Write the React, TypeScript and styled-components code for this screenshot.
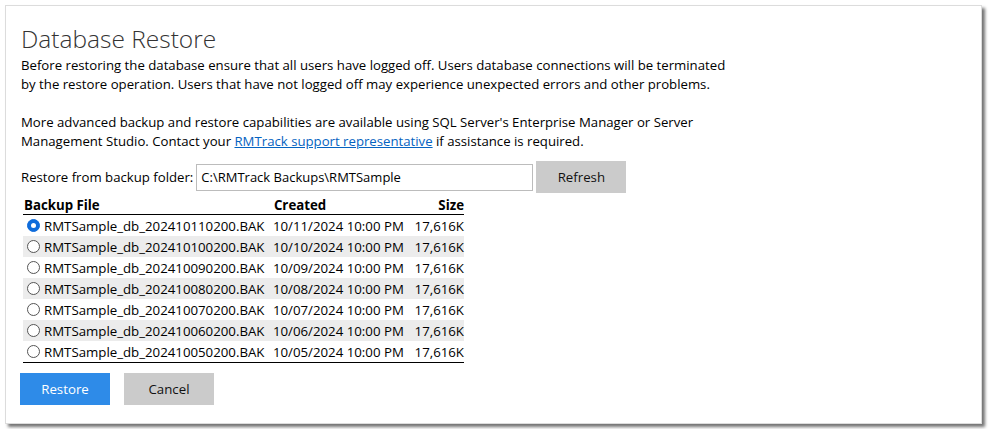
import React from "react";
import styled, { createGlobalStyle } from "styled-components";

const GlobalStyle = createGlobalStyle`
  body {
    margin: 0;
    background: #fff;
    font-family: "Open Sans", "Noto Sans", sans-serif;
    color: #000;
  }
`;

interface Backup {
  file: string;
  created: string;
  size: string;
}

const backups: Backup[] = [
  { file: "RMTSample_db_202410110200.BAK", created: "10/11/2024 10:00 PM", size: "17,616K" },
  { file: "RMTSample_db_202410100200.BAK", created: "10/10/2024 10:00 PM", size: "17,616K" },
  { file: "RMTSample_db_202410090200.BAK", created: "10/09/2024 10:00 PM", size: "17,616K" },
  { file: "RMTSample_db_202410080200.BAK", created: "10/08/2024 10:00 PM", size: "17,616K" },
  { file: "RMTSample_db_202410070200.BAK", created: "10/07/2024 10:00 PM", size: "17,616K" },
  { file: "RMTSample_db_202410060200.BAK", created: "10/06/2024 10:00 PM", size: "17,616K" },
  { file: "RMTSample_db_202410050200.BAK", created: "10/05/2024 10:00 PM", size: "17,616K" },
];

const Page = styled.div`
  padding: 5px;
`;

const Panel = styled.div`
  box-sizing: border-box;
  width: 977px;
  height: 419px;
  border: 1px solid #dcdcdc;
  box-shadow: 3px 3px 3px rgba(0, 0, 0, 0.55);
  background: #fff;
  padding: 16px 15px 0 15px;
`;

const Title = styled.h1`
  margin: 0;
  font-family: "Open Sans", sans-serif;
  font-weight: 300;
  font-size: 24.5px;
  line-height: 34px;
  color: #333;
`;

const Text = styled.p`
  margin: 0 0 19px 0;
  font-size: 13.2px;
  line-height: 19px;
  white-space: nowrap;
`;

const Link = styled.a`
  color: #0563c1;
  text-decoration: underline;
`;

const FolderRow = styled.div`
  display: flex;
  align-items: center;
  gap: 3px;
  margin-top: -9px;
  font-size: 13.2px;
`;

const FolderInput = styled.input`
  box-sizing: border-box;
  width: 337px;
  height: 27px;
  border: 1px solid #bcbcbc;
  padding: 0 4px;
  font-family: "Open Sans", sans-serif;
  font-size: 13px;
  color: #000;
  outline: none;
`;

const ActionButton = styled.button<{ primary?: boolean }>`
  box-sizing: border-box;
  width: 90px;
  height: 32px;
  border: none;
  background: ${({ primary }) => (primary ? "#2e8be8" : "#cbcbcb")};
  color: ${({ primary }) => (primary ? "#fff" : "#111")};
  font-family: "Open Sans", sans-serif;
  font-size: 13.25px;
  cursor: pointer;
`;

const Table = styled.table`
  margin-top: 2px;
  margin-left: 2px;
  width: 441px;
  border-collapse: collapse;
  font-size: 13.25px;
  border-bottom: 1px solid #000;
`;

const Th = styled.th<{ right?: boolean; w?: number }>`
  text-align: ${({ right }) => (right ? "right" : "left")};
  width: ${({ w }) => (w ? `${w}px` : "auto")};
  font-weight: 700;
  padding: 0 0 0 1px;
  height: 19px;
  border-bottom: 1px solid #000;
`;

const Tr = styled.tr<{ odd: boolean }>`
  background: ${({ odd }) => (odd ? "#ececec" : "transparent")};
`;

const Td = styled.td<{ right?: boolean }>`
  text-align: ${({ right }) => (right ? "right" : "left")};
  padding: 0;
  height: 21px;
  white-space: nowrap;
`;

const FileCell = styled.label`
  display: flex;
  align-items: center;
  gap: 4px;
`;

const Radio = styled.span<{ checked: boolean }>`
  box-sizing: border-box;
  width: 13px;
  height: 13px;
  margin-left: 4px;
  border-radius: 50%;
  border: 1px solid ${({ checked }) => (checked ? "#0f6cdb" : "#555")};
  background: ${({ checked }) => (checked ? "#0f6cdb" : "#fff")};
  display: flex;
  align-items: center;
  justify-content: center;
  &::after {
    content: "";
    display: ${({ checked }) => (checked ? "block" : "none")};
    width: 5px;
    height: 5px;
    border-radius: 50%;
    background: #fff;
  }
`;

const Buttons = styled.div`
  display: flex;
  gap: 14px;
  margin-top: 10px;
  margin-left: -1px;
`;

export default function App() {
  return (
    <>
      <GlobalStyle />
      <Page>
        <Panel>
          <Title>Database Restore</Title>
          <Text>
            Before restoring the database ensure that all users have logged off. Users database
            connections will be terminated
            <br />
            by the restore operation. Users that have not logged off may experience unexpected
            errors and other problems.
          </Text>
          <Text>
            More advanced backup and restore capabilities are available using SQL Server's
            Enterprise Manager or Server
            <br />
            Management Studio. Contact your <Link href="#">RMTrack support representative</Link>{" "}
            if assistance is required.
          </Text>
          <FolderRow>
            <span>Restore from backup folder:</span>
            <FolderInput defaultValue="C:\RMTrack Backups\RMTSample" />
            <ActionButton>Refresh</ActionButton>
          </FolderRow>
          <Table>
            <thead>
              <tr>
                <Th w={250}>Backup File</Th>
                <Th w={142}>Created</Th>
                <Th right>Size</Th>
              </tr>
            </thead>
            <tbody>
              {backups.map((b, i) => (
                <Tr key={b.file} odd={i % 2 === 1}>
                  <Td>
                    <FileCell>
                      <Radio checked={i === 0} />
                      {b.file}
                    </FileCell>
                  </Td>
                  <Td>{b.created}</Td>
                  <Td right>{b.size}</Td>
                </Tr>
              ))}
            </tbody>
          </Table>
          <Buttons>
            <ActionButton primary>Restore</ActionButton>
            <ActionButton>Cancel</ActionButton>
          </Buttons>
        </Panel>
      </Page>
    </>
  );
}
